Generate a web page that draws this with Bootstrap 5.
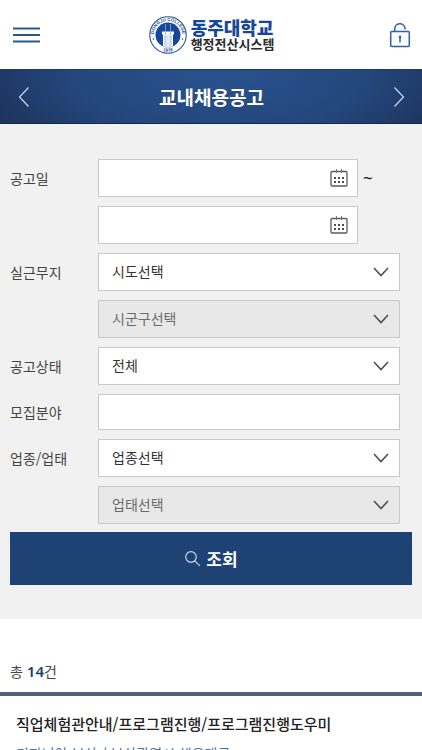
<!DOCTYPE html>
<html lang="ko">
<head>
<meta charset="utf-8">
<meta name="viewport" content="width=device-width, initial-scale=1">
<title>동주대학교 행정전산시스템 - 교내채용공고</title>
<link href="https://cdn.jsdelivr.net/npm/bootstrap@5.3.0/dist/css/bootstrap.min.css" rel="stylesheet">
<style>
  body { font-family: "Noto Sans CJK KR", sans-serif; font-size: 14px; line-height: 20px; color: #444; }
  .plain-btn { background: none; border: 0; padding: 0; line-height: 0; }
  .site-head { height: 69px; padding: 0 11px 0 12px; }
  .head-btn { width: 28px; }
  .brand { color: #17479a; gap: 4px; }
  .brand-name { font-size: 18px; line-height: 18px; font-weight: 900; }
  .brand-sub { font-size: 13px; line-height: 16px; font-weight: 700; color: #2b2b2f; }
  .title-bar { height: 55px; padding: 0 16px 0 17px; color: #fff;
    background: radial-gradient(ellipse 62% 190% at 52% 10%, #29528f 0%, #24477c 55%, #1b3159 100%);
    border-top: 1px solid #213a63; border-bottom: 1px solid #14294d; }
  .title-bar h1 { font-size: 19px; line-height: 26px; font-weight: 700; }
  .search-panel { background: #f1f1f1; padding: 35px 10px 34px; }
  .field-list { gap: 9px; padding-right: 12px; margin-bottom: 8px; }
  .field-label { width: 88px; }
  .box { height: 38px; border: 1px solid #c9c9c9; border-radius: 0; background-color: #fff; font-size: 14px; line-height: 20px; color: #333; }
  .box.form-control { height: 36px; }
  .box.form-select { padding: 0 36px 2px 13px;
    background-image: url("data:image/svg+xml,%3Csvg xmlns='http://www.w3.org/2000/svg' viewBox='0 0 16 10'%3E%3Cpath d='M1 1l7 7.5L15 1' fill='none' stroke='%23505050' stroke-width='1.6'/%3E%3C/svg%3E");
    background-size: 16px 10px; background-position: right 10px center; }
  .box.form-select:disabled { background-color: #e8e8e8; color: #6c6c6c; opacity: 1; }
  .date-box { padding-right: 9px; }
  .date-box input { background: none; outline: 0; min-width: 0; }
  .tilde { width: 42px; padding-left: 5px; color: #222; font-family: "Noto Sans", sans-serif; font-size: 17px; font-weight: 500; }
  .search-btn { height: 53px; border-radius: 0; background: #1f4275; color: #fff; font-size: 17px; font-weight: 700; gap: 5px; }
  .search-btn:hover { background: #19365f; color: #fff; }
  .total { padding: 42px 10px 11px; }
  .total strong { font-family: "Noto Sans", sans-serif; font-size: 15px; line-height: 20px; color: #1b3b74; font-weight: 600; }
  .job-list { border-top: 4px solid #515f78; }
  .job-item { padding: 16px; }
  .job-title { font-size: 15px; line-height: 24px; font-weight: 500; color: #222; margin-bottom: 7px; }
  .job-place { color: #4a73ad; }
  .page-shell { height: 100vh; overflow-y: auto; scrollbar-width: none; }
  .page-shell::-webkit-scrollbar { display: none; }
</style>
<script src="https://cdn.jsdelivr.net/npm/bootstrap@5.3.0/dist/js/bootstrap.bundle.min.js"></script>
</head>
<body>
<div class="page-shell">
  <header class="site-head d-flex align-items-center justify-content-between bg-white">
    <button class="plain-btn head-btn text-start" type="button" aria-label="메뉴">
      <svg width="28" height="18" viewBox="0 0 28 18"><path d="M1 2.500h27M1 9h27M1 15.500h27" stroke="#2c5593" stroke-width="2"/></svg>
    </button>
    <a class="brand d-flex align-items-center text-decoration-none" href="#">
      <svg width="38" height="38" viewBox="0 0 38 38" aria-hidden="true">
        <defs><path id="ring-top" d="M6.300 25.500A14.200 14.200 0 1 1 31.700 25.500"/><path id="ring-bottom" d="M9 32.300A16.600 16.600 0 0 0 29 32.300"/></defs>
        <circle cx="19" cy="19" r="18.200" fill="#fff" stroke="#28559d" stroke-width="1.100"/>
        <circle cx="19" cy="19" r="12.500" fill="#17479a"/>
        <g fill="#17479a" font-family="Liberation Sans, sans-serif" font-weight="700" font-size="4.500">
          <text><textPath href="#ring-top" startOffset="50%" text-anchor="middle">DONGJU COLLEGE</textPath></text>
          <text><textPath href="#ring-bottom" startOffset="50%" text-anchor="middle">1978</textPath></text>
        </g>
        <circle cx="4.500" cy="23" r=".8" fill="#17479a"/><circle cx="33.500" cy="23" r=".8" fill="#17479a"/>
        <path d="M9 13.500l2.500-1.500v14l-2.500-3zM29 13.500l-2.500-1.500v14l2.500-3z" fill="#17479a"/>
        <path d="M13 15.500h12v3h-1v11.800a12.500 12.500 0 0 1-10 0v-11.800h-1z" fill="#fff"/>
        <path d="M15.500 18.500h7v12.200a12 12 0 0 1-7 0z" fill="#dfe8f5"/>
        <path d="M16.500 8v10M21.500 8v10" stroke="#8aa6d4" stroke-width=".8"/>
        <path d="M16 18.500v12M22 18.500v12" stroke="#9bb3da" stroke-width=".7"/>
      </svg>
      <span class="d-flex flex-column">
        <span class="brand-name">동주대학교</span>
        <span class="brand-sub">행정전산시스템</span>
      </span>
    </a>
    <button class="plain-btn head-btn text-end" type="button" aria-label="로그인">
      <svg width="22" height="26" viewBox="0 0 22 26" fill="none" stroke="#2f60ad" stroke-width="1.500"><rect x="1.700" y="9.500" width="18.600" height="15" rx="1"/><path d="M5.700 9.500V7a5.200 5.200 0 0 1 10.300-1v1.500"/><path d="M11 15v5.500"/><circle cx="11" cy="14.900" r="1.300" fill="#2f60ad" stroke="none"/></svg>
    </button>
  </header>

  <nav class="title-bar d-flex align-items-center justify-content-between" aria-label="페이지 이동">
    <button class="plain-btn" type="button" aria-label="이전">
      <svg width="14" height="22" viewBox="0 0 14 22"><path d="M11.500 1.500L2.500 11l9 9.500" fill="none" stroke="#cdd7e6" stroke-width="1.200"/></svg>
    </button>
    <h1 class="mb-0">교내채용공고</h1>
    <button class="plain-btn" type="button" aria-label="다음">
      <svg width="14" height="22" viewBox="0 0 14 22"><path d="M2.500 1.500l9 9.500-9 9.500" fill="none" stroke="#cdd7e6" stroke-width="1.200"/></svg>
    </button>
  </nav>

  <main>
    <form class="search-panel">
      <div class="field-list d-flex flex-column">
        <div class="d-flex align-items-center">
          <label class="field-label flex-shrink-0" for="date-from">공고일</label>
          <div class="box date-box d-flex align-items-center flex-grow-1">
            <input class="border-0 flex-grow-1" type="text" id="date-from">
            <button class="plain-btn" type="button" aria-label="시작일 선택">
              <svg width="18" height="18" viewBox="0 0 18 18"><rect x="1" y="2.500" width="16" height="14.500" rx="1" fill="none" stroke="#5b5b5b" stroke-width="1.300"/><path d="M6.500 0v4M11.500 0v4" stroke="#777" stroke-width="1"/><path d="M4 8h2v2H4zM8 8h2v2H8zM12 8h2v2h-2zM4 12h2v2H4zM8 12h2v2H8zM12 12h2v2h-2z" fill="#4d4d4d"/></svg>
            </button>
          </div>
          <span class="tilde flex-shrink-0">~</span>
        </div>
        <div class="d-flex align-items-center">
          <span class="field-label flex-shrink-0"></span>
          <div class="box date-box d-flex align-items-center flex-grow-1">
            <input class="border-0 flex-grow-1" type="text" id="date-to" aria-label="공고일 종료">
            <button class="plain-btn" type="button" aria-label="종료일 선택">
              <svg width="18" height="18" viewBox="0 0 18 18"><rect x="1" y="2.500" width="16" height="14.500" rx="1" fill="none" stroke="#5b5b5b" stroke-width="1.300"/><path d="M6.500 0v4M11.500 0v4" stroke="#777" stroke-width="1"/><path d="M4 8h2v2H4zM8 8h2v2H8zM12 8h2v2h-2zM4 12h2v2H4zM8 12h2v2H8zM12 12h2v2h-2z" fill="#4d4d4d"/></svg>
            </button>
          </div>
          <span class="tilde flex-shrink-0"></span>
        </div>
        <div class="d-flex align-items-center">
          <label class="field-label flex-shrink-0" for="sido">실근무지</label>
          <select class="form-select box" id="sido"><option>시도선택</option></select>
        </div>
        <div class="d-flex align-items-center">
          <span class="field-label flex-shrink-0"></span>
          <select class="form-select box" id="sigungu" aria-label="시군구" disabled><option>시군구선택</option></select>
        </div>
        <div class="d-flex align-items-center">
          <label class="field-label flex-shrink-0" for="status">공고상태</label>
          <select class="form-select box" id="status"><option>전체</option></select>
        </div>
        <div class="d-flex align-items-center">
          <label class="field-label flex-shrink-0" for="area">모집분야</label>
          <input class="form-control box" type="text" id="area">
        </div>
        <div class="d-flex align-items-center">
          <label class="field-label flex-shrink-0" for="industry">업종/업태</label>
          <select class="form-select box" id="industry"><option>업종선택</option></select>
        </div>
        <div class="d-flex align-items-center">
          <span class="field-label flex-shrink-0"></span>
          <select class="form-select box" id="business" aria-label="업태" disabled><option>업태선택</option></select>
        </div>
      </div>
      <button class="btn search-btn border-0 w-100 d-flex align-items-center justify-content-center" type="submit">
        <svg width="17" height="17" viewBox="0 0 17 17" fill="none" stroke="#c5d6ec" stroke-width="1.200"><circle cx="7" cy="7" r="5.300"/><path d="M10.800 10.800l5 5"/></svg>
        조회
      </button>
    </form>

    <section>
      <p class="total mb-0">총 <strong>14</strong>건</p>
      <div class="job-list">
        <article class="job-item">
          <h2 class="job-title">직업체험관안내/프로그램진행/프로그램진행도우미</h2>
          <a class="job-place text-decoration-none" href="#">키자니아 부산 / 부산광역시 해운대구</a>
        </article>
      </div>
    </section>
  </main>
</div>
</body>
</html>
